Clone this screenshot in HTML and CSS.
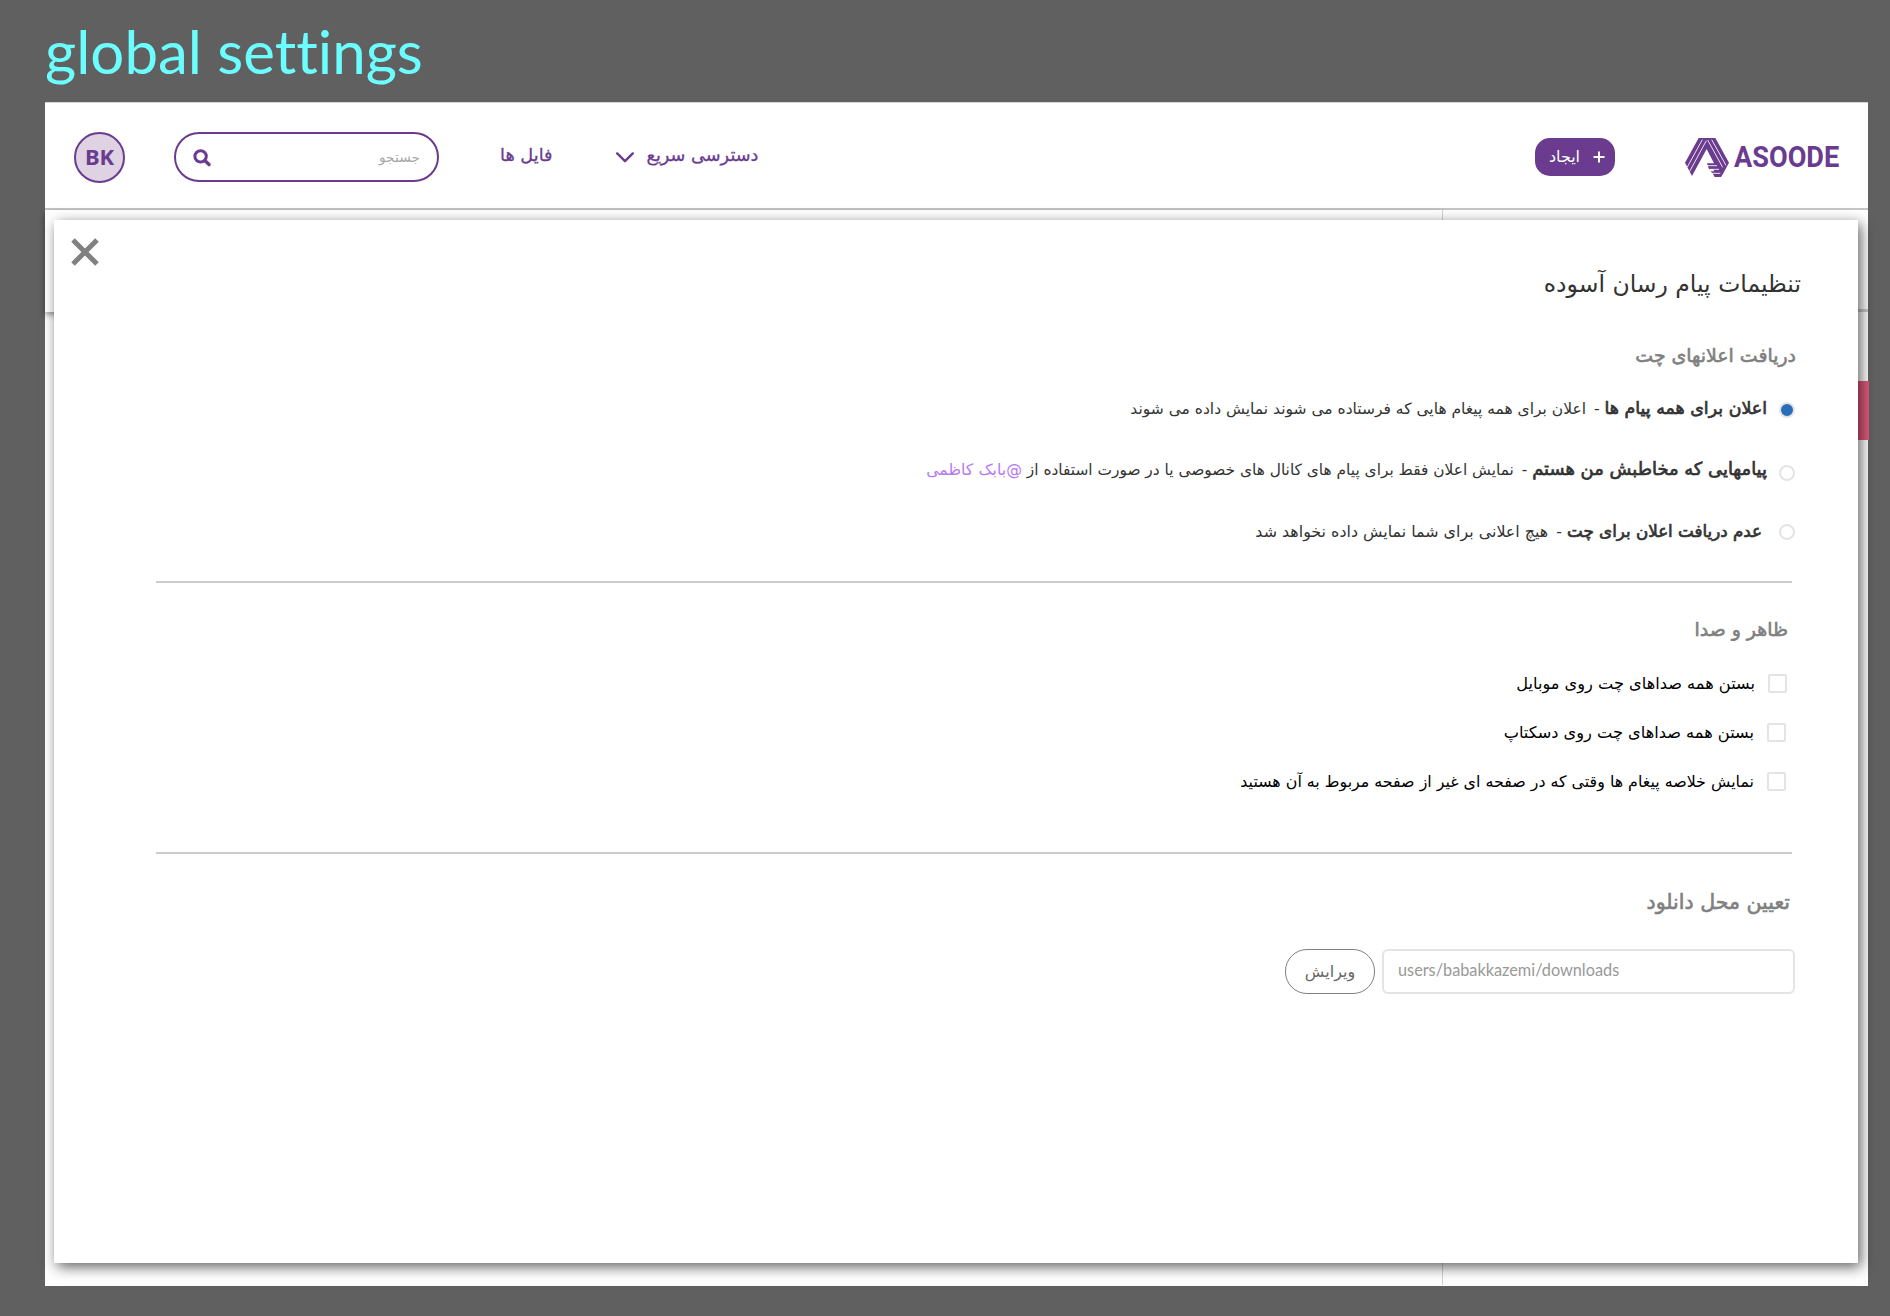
FILE: index.html
```html
<!DOCTYPE html>
<html lang="fa">
<head>
<meta charset="utf-8">
<title>global settings</title>
<link rel="stylesheet" href="styles.css">
</head>
<body>
<h1 class="board-title">global settings</h1>
<div class="app">
  <header class="header">
    <div class="avatar">BK</div>
    <div class="search">
      <svg class="search-icon" viewBox="0 0 18 18" width="18" height="18"><circle cx="7.6" cy="7.4" r="5.7" fill="none" stroke="#6a3b8e" stroke-width="3"/><path d="M11.8 11.6L16 15.6" stroke="#6a3b8e" stroke-width="3.4" stroke-linecap="round"/></svg>
      <span class="search-hint" dir="rtl">جستجو</span>
    </div>
    <nav class="nav">
      <a class="nav-link">فایل ها</a>
      <svg class="chevron" viewBox="0 0 18 11" width="18" height="11"><path d="M1.2 1.4L9 9.2L16.8 1.4" fill="none" stroke="#6a3b8e" stroke-width="2.4" stroke-linecap="round" stroke-linejoin="round"/></svg>
      <a class="nav-link quick">دسترسی سریع</a>
    </nav>
    <button class="create"><span>ایجاد</span><svg viewBox="0 0 12 12" width="12" height="12"><path d="M6 .5V11.5M.5 6H11.5" stroke="#fff" stroke-width="2"/></svg></button>
    <div class="logo">
      <svg viewBox="0 0 132 117" width="44" height="39">
        <path fill="#6a3b8e" d="M41 0H91L132 74L112 111L108 117H89L84 108L77 100H88L84 94H72L66 76H87L65 33L21 114L0 74Z"/>
        <g fill="none" stroke="#fff" stroke-width="2.6">
          <path d="M52 5L7 87M64 8L14 100"/>
          <path d="M68 6L113 88M80 5L123 82"/>
          <path d="M66 83H96M74 94H102M80 106H106"/>
        </g>
      </svg>
      <span class="wordmark">ASOODE</span>
    </div>
  </header>
  <div class="workspace">
    <div class="toolbar"></div>
    <div class="side"><div class="side-line"></div><div class="side-tag"></div></div>
    <main class="modal" dir="rtl">
      <svg class="close" viewBox="0 0 28 28" width="28" height="28"><path d="M2 2L26 26M26 2L2 26" stroke="#808080" stroke-width="5"/></svg>
      <h2 class="title">تنظیمات پیام رسان آسوده</h2>
      <section class="group">
        <h3 class="heading">دریافت اعلانهای چت</h3>
        <div class="option"><i class="radio checked"></i><p class="o1"><b>اعلان برای همه پیام ها</b> - <span>اعلان برای همه پیغام هایی که فرستاده می شوند نمایش داده می شوند</span></p></div>
        <div class="option"><i class="radio low"></i><p class="o2"><b>پیامهایی که مخاطبش من هستم</b> - <span>نمایش اعلان فقط برای پیام های کانال های خصوصی یا در صورت استفاده از <em>@بابک کاظمی</em></span></p></div>
        <div class="option"><i class="radio"></i><p class="o3"><b>عدم دریافت اعلان برای چت</b> - <span>هیچ اعلانی برای شما نمایش داده نخواهد شد</span></p></div>
      </section>
      <section class="group look">
        <h3 class="heading">ظاهر و صدا</h3>
        <div class="check first"><i class="box"></i><p>بستن همه صداهای چت روی موبایل</p></div>
        <div class="check"><i class="box"></i><p>بستن همه صداهای چت روی دسکتاپ</p></div>
        <div class="check long"><i class="box"></i><p>نمایش خلاصه پیغام ها وقتی که در صفحه ای غیر از صفحه مربوط به آن هستید</p></div>
      </section>
      <section class="group download">
        <h3 class="heading">تعیین محل دانلود</h3>
        <div class="path-row"><div class="path" dir="ltr">users/babakkazemi/downloads</div><button class="edit">ویرایش</button></div>
      </section>
    </main>
  </div>
</div>
</body>
</html>
```
FILE: styles.css
```css
* { box-sizing: border-box; }
body { margin: 0; height: 1316px; background: #606060; overflow: hidden; font-family: "DejaVu Sans", sans-serif; }
h1, h2, h3, p { margin: 0; font-weight: normal; }
button { border: 0; padding: 0; font-family: inherit; white-space: nowrap; }
svg { flex: none; }

.board-title { height: 102px; padding: 15px 0 0 45px; font: 60px/72px Lato, sans-serif; font-variant-ligatures: none; color: #6cfeff; white-space: nowrap; }
.app { width: 1823px; margin-left: 45px; }

.header { height: 108px; display: flex; align-items: flex-start; padding-top: 29px; background: #fff; border-top: 1px solid #d5d5d5; border-bottom: 2px solid #c6c6c6; }
.avatar { width: 51px; height: 51px; margin-left: 29px; border: 2px solid #6a3b8e; border-radius: 50%; background: #ded2e3; color: #6a3b8e; font: bold 22px/45px "Noto Sans", sans-serif; text-align: center; }
.search { width: 265px; height: 50px; margin-left: 49px; padding: 0 17px; border: 2px solid #6a3b8e; border-radius: 25px; display: flex; align-items: center; justify-content: space-between; }
.search-icon { margin-top: 1px; }
.search-hint { font-size: 13.8px; color: #a9a9a9; line-height: 40px; }
.nav { display: flex; align-items: center; height: 46px; margin-left: 61px; color: #6a3b8e; font-size: 17.7px; -webkit-text-stroke: .3px #6a3b8e; white-space: nowrap; direction: ltr; }
.chevron { margin: 4px 13px 0 63px; }
.create { display: flex; align-items: center; justify-content: space-between; width: 80px; height: 38px; margin: 6px 0 0 auto; padding: 0 10px 0 14px; border-radius: 15px; background: #6a3b8e; color: #fff; font-size: 15.9px; }
.create span { padding-bottom: 2px; }
.logo { display: flex; align-items: center; width: 154px; height: 39px; margin: 6px 29px 0 70px; }
.wordmark { margin-left: 5px; font: 700 29.5px/39px Roboto, sans-serif; color: #6a3b8e; transform: scaleX(.92); transform-origin: left; }

.workspace { position: relative; height: 1076px; padding: 10px 0 0 9px; background: #fff; }
.toolbar { position: absolute; left: 0; top: 0; width: 1397px; height: 102px; background: #fff; box-shadow: 0 3px 6px rgba(0,0,0,.4); }
.side { position: absolute; right: 0; top: 0; width: 426px; height: 1075px; background: #fff; border-left: 1px solid #d2d2d2; }
.side-line { margin-top: 99px; height: 3px; background: #ccc; }
.side-tag { margin: 69px -1px 0 0; height: 59px; background: #e05a7c; }

.modal { position: relative; width: 1804px; height: 1043px; padding-top: 43px; background: #fff; box-shadow: 3px 4px 13px rgba(0,0,0,.62); color: #333; }
.close { position: absolute; left: 17px; top: 18px; }
.title { height: 40px; margin-right: 57px; font-size: 23.5px; line-height: 42px; }
.group { margin: 38px 66px 0 102px; padding-bottom: 20px; border-bottom: 2px solid #ccc; }
.heading { height: 30px; font-size: 18.9px; line-height: 29px; color: #808080; -webkit-text-stroke: .6px #808080; margin-right: -4px; margin-bottom: 7px; white-space: nowrap; }
.option { display: flex; align-items: center; height: 61px; margin-right: -3px; }
.radio { flex: none; width: 16px; height: 16px; border: 2px solid #e4e4e4; border-radius: 50%; margin-top: 3px; }
.radio.checked { background: #286db8; }
.radio.low { margin-top: 7px; }
.option p { margin-right: 12px; line-height: 40px; white-space: nowrap; }
.option b { font-weight: normal; -webkit-text-stroke: .7px #333; }
.option span { margin-right: 3px; }
.option em { font-style: normal; color: #b779f2; }
.o1 { font-size: 15.5px; } .o1 b { font-size: 17.4px; }
.o2 { font-size: 15.4px; } .o2 b { font-size: 17.9px; } .o2 em { font-size: 15.8px; }
.option .o3 { font-size: 15.9px; margin-right: 17px; padding-top: 2px; } .o3 b { font-size: 16.7px; }

.look { margin-top: 32px; padding-bottom: 46px; }
.look .heading { line-height: 28px; margin-right: 4px; margin-bottom: 14px; }
.check { display: flex; align-items: center; height: 49px; margin-right: 6px; font-size: 16.2px; color: #000; }
.check.first { margin-right: 5px; }
.check.long { font-size: 15.87px; }
.box { flex: none; width: 19px; height: 19px; border: 2px solid #e4e4e4; border-radius: 2px; }
.check p { margin-right: 13px; line-height: 40px; white-space: nowrap; }

.download { margin-top: 33px; border: 0; }
.download .heading { font-size: 20.5px; line-height: 31px; margin-right: 2px; margin-bottom: 32px; }
.path-row { display: flex; margin-right: -3px; }
.path { width: 413px; height: 45px; padding-left: 14px; border: 2px solid #e4e4e4; border-radius: 6px; font: 16.3px/38px Lato, sans-serif; color: #999; }
.edit { width: 90px; height: 45px; margin-right: 7px; border: 1px solid #808080; border-radius: 22px; background: #fff; color: #666; font-size: 16px; line-height: 42px; }
```
